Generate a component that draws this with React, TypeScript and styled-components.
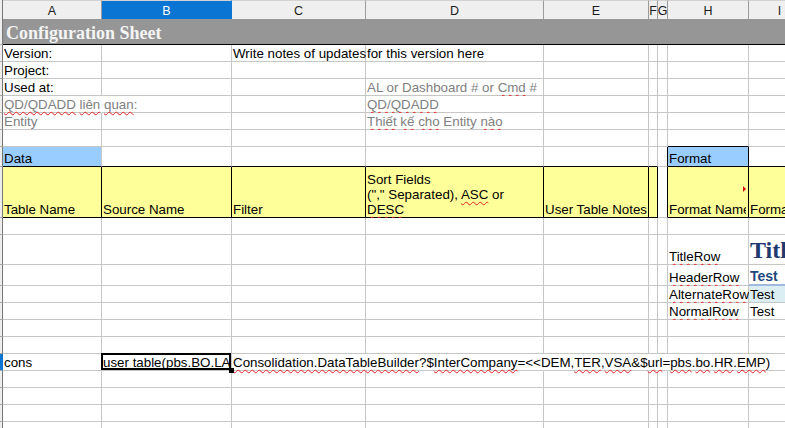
import React from 'react';
import styled, { createGlobalStyle, css } from 'styled-components';

type Col = 'A' | 'B' | 'C' | 'D' | 'E' | 'F' | 'G' | 'H' | 'I';
type Edge = 'grid' | 'black' | 'none' | 'accent';
type Fill = 'white' | 'data' | 'head' | 'alt';

type CellSpec = {
    content?: React.ReactNode;
    right?: Edge;
    bottom?: Edge;
    fill?: Fill;
    muted?: boolean;
    over?: boolean;
    wrap?: boolean;
    clip?: boolean;
    marker?: boolean;
    cursor?: boolean;
};

type RowSpec = {
    height: number;
    selected?: boolean;
    cells: Partial<Record<Col, CellSpec>>;
};

const COLUMNS: { name: Col; width: number }[] = [
    { name: 'A', width: 99 },
    { name: 'B', width: 130 },
    { name: 'C', width: 134 },
    { name: 'D', width: 178 },
    { name: 'E', width: 105 },
    { name: 'F', width: 9 },
    { name: 'G', width: 10 },
    { name: 'H', width: 81 },
    { name: 'I', width: 62 },
];

const SELECTED_COL: Col = 'B';

const FILLS: Record<Fill, string> = {
    white: '#ffffff',
    data: '#99ccff',
    head: '#ffff99',
    alt: '#dbeef4',
};

const edge = (e: Edge = 'grid') => {
    switch (e) {
        case 'black':
            return '1px solid #000000';
        case 'none':
            return '1px solid transparent';
        case 'accent':
            return '2px solid #9fbadc';
        default:
            return '1px solid #c6c6c6';
    }
};

const GlobalStyle = createGlobalStyle`
    html, body {
        margin: 0;
        padding: 0;
        background: #ffffff;
        overflow: hidden;
    }
`;

// spell-check squiggle, as the sheet app draws it
const Typo = styled.span`
    text-decoration: underline wavy #e42222;
    text-decoration-thickness: 1px;
    text-underline-offset: 2px;
    text-decoration-skip-ink: none;
`;

const TitleText = styled.span`
    font-family: 'Liberation Serif', 'Times New Roman', serif;
    font-weight: bold;
    font-size: 24px;
    line-height: 27px;
    color: #1f3a6e;
`;

const HeaderText = styled.span`
    font-weight: bold;
    font-size: 14px;
    color: #1f497d;
`;

const ROWS: RowSpec[] = [
    {
        height: 17,
        cells: {
            A: { content: 'Version:' },
            C: { content: 'Write notes of updates' },
            D: { content: 'for this version here' },
        },
    },
    { height: 17, cells: { A: { content: 'Project:' } } },
    {
        height: 17,
        cells: {
            A: { content: 'Used at:' },
            D: { muted: true, content: <>AL or Dashboard # or <Typo>Cmd</Typo> #</> },
        },
    },
    {
        height: 17,
        cells: {
            A: {
                muted: true,
                over: true,
                right: 'none',
                content: <><Typo>QD/QDADD</Typo> <Typo>liên</Typo> <Typo>quan</Typo>:</>,
            },
            D: { muted: true, content: <Typo>QD/QDADD</Typo> },
        },
    },
    {
        height: 17,
        cells: {
            A: { muted: true, content: 'Entity' },
            D: {
                muted: true,
                content: <><Typo>Thiết</Typo> <Typo>kế</Typo> <Typo>cho</Typo> Entity <Typo>nào</Typo></>,
            },
        },
    },
    { height: 17, cells: { H: { bottom: 'black' } } },
    {
        height: 20,
        cells: {
            A: { fill: 'data', bottom: 'black', content: 'Data' },
            B: { bottom: 'black' },
            C: { bottom: 'black' },
            D: { bottom: 'black' },
            E: { bottom: 'black' },
            F: { bottom: 'black' },
            G: { right: 'black' },
            H: { fill: 'data', right: 'black', bottom: 'black', content: 'Format' },
            I: { bottom: 'black' },
        },
    },
    {
        height: 51,
        cells: {
            A: { fill: 'head', right: 'black', bottom: 'black', content: 'Table Name' },
            B: { fill: 'head', right: 'black', bottom: 'black', content: 'Source Name' },
            C: { fill: 'head', right: 'black', bottom: 'black', content: 'Filter' },
            D: {
                fill: 'head',
                right: 'black',
                bottom: 'black',
                wrap: true,
                content: <>Sort Fields<br />(&quot;,&quot; Separated), <Typo>ASC</Typo> or <Typo>DESC</Typo></>,
            },
            E: { fill: 'head', right: 'black', bottom: 'black', content: 'User Table Notes' },
            F: { fill: 'head', right: 'black', bottom: 'black' },
            G: { right: 'black' },
            H: { fill: 'head', right: 'black', bottom: 'black', clip: true, marker: true, content: 'Format Name' },
            I: { fill: 'head', bottom: 'black', content: 'Format' },
        },
    },
    { height: 17, cells: {} },
    {
        height: 30,
        cells: {
            H: { content: <Typo>TitleRow</Typo> },
            I: { content: <TitleText>Title</TitleText> },
        },
    },
    {
        height: 21,
        cells: {
            H: { content: <Typo>HeaderRow</Typo> },
            I: { bottom: 'accent', content: <HeaderText>Test</HeaderText> },
        },
    },
    {
        height: 17,
        cells: {
            H: { content: <Typo>AlternateRow</Typo> },
            I: { fill: 'alt', content: 'Test' },
        },
    },
    {
        height: 17,
        cells: {
            H: { content: <Typo>NormalRow</Typo> },
            I: { content: 'Test' },
        },
    },
    { height: 17, cells: {} },
    { height: 17, cells: {} },
    {
        height: 17,
        selected: true,
        cells: {
            A: { content: 'cons' },
            B: {
                clip: true,
                cursor: true,
                content: <>user table(<Typo>pbs</Typo>.<Typo>BO</Typo>.<Typo>LA</Typo></>,
            },
            C: {
                over: true,
                right: 'none',
                content: (
                    <>
                        <Typo>Consolidation.DataTableBuilder</Typo>?$<Typo>InterCompany</Typo>=&lt;&lt;DEM,<Typo>TER</Typo>,<Typo>VSA</Typo>&amp;$<Typo>url</Typo>=<Typo>pbs</Typo>.<Typo>bo</Typo>.<Typo>HR</Typo>.<Typo>EMP</Typo>)
                    </>
                ),
            },
            D: { right: 'none' },
            E: { right: 'none' },
            F: { right: 'none' },
            G: { right: 'none' },
            H: { right: 'none' },
        },
    },
    { height: 17, cells: {} },
    { height: 17, cells: {} },
    { height: 17, cells: {} },
    { height: 17, cells: {} },
];

const Sheet = styled.div`
    display: grid;
    grid-template-columns: 3px ${COLUMNS.map(c => `${c.width}px`).join(' ')};
    grid-template-rows: 19px 26px ${ROWS.map(r => `${r.height}px`).join(' ')};
    width: 785px;
    height: 428px;
    overflow: hidden;
    font-family: 'Liberation Sans', Arial, sans-serif;
    color: #000000;
`;

const Corner = styled.div`
    box-sizing: border-box;
    background: #eeeeee;
    border-right: 1px solid #777777;
`;

const ColHead = styled.div<{ $selected?: boolean }>`
    box-sizing: border-box;
    display: flex;
    align-items: center;
    justify-content: center;
    overflow: hidden;
    font-size: 12.5px;
    line-height: 14px;
    padding-top: 1px;
    background: ${p => (p.$selected ? '#0a75d2' : '#efefef')};
    color: ${p => (p.$selected ? '#ffffff' : '#1b1b1b')};
    border-right: 1px solid ${p => (p.$selected ? '#0a75d2' : '#9b9b9b')};
    border-top: 1px solid #d2d2d2;
`;

const RowHead = styled.div<{ $selected?: boolean }>`
    box-sizing: border-box;
    background: ${p => (p.$selected ? '#0a75d2' : '#eeeeee')};
    border-right: 1px solid ${p => (p.$selected ? '#0a75d2' : '#777777')};
    border-bottom: 1px solid #a8a8a8;
`;

const TitleBar = styled.div`
    grid-column: 2 / -1;
    box-sizing: border-box;
    display: flex;
    align-items: flex-end;
    padding: 0 0 1px 3px;
    background: #969696;
    border-bottom: 1px solid #000000;
    font-family: 'Liberation Serif', 'Times New Roman', serif;
    font-weight: bold;
    font-size: 18px;
    line-height: 20px;
    color: #f4f4f4;
    white-space: nowrap;
`;

const Cell = styled.div<{
    $right?: Edge;
    $bottom?: Edge;
    $fill?: Fill;
    $muted?: boolean;
    $over?: boolean;
    $wrap?: boolean;
}>`
    position: relative;
    box-sizing: border-box;
    display: flex;
    align-items: flex-end;
    min-width: 0;
    padding: 0 2px 0 1px;
    font-size: 13.33px;
    line-height: 15px;
    white-space: ${p => (p.$wrap ? 'normal' : 'nowrap')};
    color: ${p => (p.$muted ? '#808080' : '#000000')};
    background: ${p => FILLS[p.$fill ?? 'white']};
    border-right: ${p => edge(p.$right)};
    border-bottom: ${p => edge(p.$bottom)};

    ${({ $over }) => $over && css`
        z-index: 1;
    `}
`;

const CellText = styled.span<{ $clip?: boolean }>`
    display: block;
    min-width: 0;

    ${({ $clip }) => $clip && css`
        overflow: hidden;
    `}
`;

const OverflowMarker = styled.span`
    position: absolute;
    right: 2px;
    bottom: 25px;
    width: 0;
    height: 0;
    border-left: 3px solid #d01010;
    border-top: 3px solid transparent;
    border-bottom: 3px solid transparent;
`;

const CellCursor = styled.span`
    position: absolute;
    left: -1px;
    top: -1px;
    right: 0;
    bottom: 0;
    border: 2px solid #000000;
    z-index: 2;
    pointer-events: none;
`;

const FillHandle = styled.span`
    position: absolute;
    right: -3px;
    bottom: -3px;
    width: 5px;
    height: 5px;
    background: #000000;
    z-index: 3;
`;

function SheetCell({ spec }: { spec: CellSpec }) {
    return (
        <Cell
            $right={spec.right}
            $bottom={spec.bottom}
            $fill={spec.fill}
            $muted={spec.muted}
            $over={spec.over}
            $wrap={spec.wrap}
        >
            {spec.content !== undefined && <CellText $clip={spec.clip}>{spec.content}</CellText>}
            {spec.marker && <OverflowMarker />}
            {spec.cursor && (
                <>
                    <CellCursor />
                    <FillHandle />
                </>
            )}
        </Cell>
    );
}

export default function App() {
    return (
        <>
            <GlobalStyle />
            <Sheet>
                <Corner />
                {COLUMNS.map(c => (
                    <ColHead key={c.name} $selected={c.name === SELECTED_COL}>
                        {c.name}
                    </ColHead>
                ))}

                <RowHead />
                <TitleBar>Configuration Sheet</TitleBar>

                {ROWS.map((row, i) => (
                    <React.Fragment key={i}>
                        <RowHead $selected={row.selected} />
                        {COLUMNS.map(c => (
                            <SheetCell key={c.name} spec={row.cells[c.name] ?? {}} />
                        ))}
                    </React.Fragment>
                ))}
            </Sheet>
        </>
    );
}
